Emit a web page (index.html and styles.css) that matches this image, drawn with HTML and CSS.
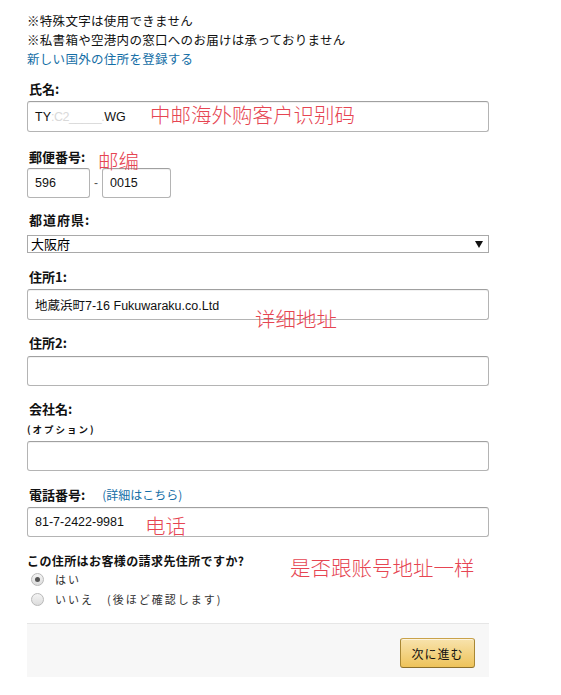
FILE: index.html
```html
<!DOCTYPE html>
<html lang="ja">
<head>
<meta charset="utf-8">
<title>住所の登録</title>
<link rel="stylesheet" href="styles.css">
</head>
<body>
<div class="page">
  <div class="notes">
    <div>※特殊文字は使用できません</div>
    <div>※私書箱や空港内の窓口へのお届けは承っておりません</div>
    <a class="link" href="#">新しい国外の住所を登録する</a>
  </div>

  <div class="field f-name">
    <div class="label">氏名:</div>
    <div class="input"><span>TY</span><span class="blur">:C2_____.</span><span>WG</span></div>
  </div>

  <div class="field f-zip">
    <div class="label">郵便番号:</div>
    <div class="zip-row">
      <input class="box zip1" type="text" value="596">
      <span class="dash">-</span>
      <input class="box zip2" type="text" value="0015">
    </div>
  </div>

  <div class="field f-pref">
    <div class="label label-wide">都道府県:</div>
    <div class="select-wrap">
      <select class="select"><option>大阪府</option></select>
      <svg class="arrow" width="8" height="7" viewBox="0 0 8 7"><path d="M0 0H8L4 7Z" fill="#111"/></svg>
    </div>
  </div>

  <div class="field f-addr1">
    <div class="label">住所1:</div>
    <input class="box wide" type="text" value="地蔵浜町7-16 Fukuwaraku.co.Ltd">
  </div>

  <div class="field f-addr2">
    <div class="label">住所2:</div>
    <input class="box wide tall30" type="text" value="">
  </div>

  <div class="field f-company">
    <div class="label">会社名:</div>
    <div class="optional">(オプション)</div>
    <input class="box wide tall30" type="text" value="">
  </div>

  <div class="field f-tel">
    <div class="label">電話番号: <span class="detail">(<a class="link" href="#">詳細はこちら</a>)</span></div>
    <input class="box wide tall30" type="text" value="81-7-2422-9981">
  </div>

  <div class="question">この住所はお客様の請求先住所ですか?</div>
  <label class="radio-row"><input class="radio" type="radio" name="billing" checked><span>はい</span></label>
  <label class="radio-row"><input class="radio" type="radio" name="billing"><span>いいえ　(後ほど確認します)</span></label>

  <div class="footer">
    <button class="next" type="button">次に進む</button>
  </div>

  <div class="note n1" lang="zh-CN">中邮海外购客户识别码</div>
  <div class="note n2" lang="zh-CN">邮编</div>
  <div class="note n3" lang="zh-CN">详细地址</div>
  <div class="note n4" lang="zh-CN">电话</div>
  <div class="note n5" lang="zh-CN">是否跟账号地址一样</div>
</div>
</body>
</html>
```

FILE: styles.css
```css
html, body {
  margin: 0;
  padding: 0;
  background: #ffffff;
}

body {
  font-family: "Noto Sans CJK JP", "Liberation Sans", sans-serif;
  color: #111;
}

.page {
  position: relative;
  width: 462px;
  margin-left: 27px;
  padding-top: 11px;
}

.notes {
  font-size: 12.5px;
  line-height: 19px;
  color: #111;
  letter-spacing: 0.3px;
}

.link {
  color: #146ea6;
  text-decoration: none;
}

.notes .link {
  display: block;
}

.field {
  display: flex;
  flex-direction: column;
}

.label {
  font-size: 13px;
  line-height: 16px;
  font-weight: bold;
  color: #111;
  margin-left: 2px;
  margin-bottom: 4px;
}

.label-wide {
  letter-spacing: 1px;
  margin-bottom: 7px;
}

.f-name { margin-top: 13px; }
.f-zip { margin-top: 17px; }
.f-zip .label { margin-bottom: 3px; }
.f-pref { margin-top: 14px; }
.f-addr1 { margin-top: 16px; }
.f-addr2 { margin-top: 15px; }
.f-addr2 .label { margin-bottom: 5px; }
.f-company { margin-top: 15px; }
.f-tel { margin-top: 16px; }

.input,
.box {
  box-sizing: border-box;
  height: 31px;
  border: 1px solid #b4b4b4;
  border-top-color: #a0a0a0;
  border-radius: 3px;
  box-shadow: inset 0 1px 0 rgba(0,0,0,0.05);
  background: #fff;
  padding: 0 7px;
  font-family: "Liberation Sans", "Noto Sans CJK JP", sans-serif;
  font-size: 12.5px;
  color: #111;
  margin: 0;
  outline: none;
}

.input {
  display: flex;
  align-items: center;
  width: 462px;
}

.blur {
  color: #d9d9d9;
  letter-spacing: -0.5px;
}

.wide {
  width: 462px;
}

.tall30 {
  height: 30px;
}

.zip-row {
  display: flex;
  align-items: center;
}

.zip1 {
  width: 63px;
  height: 30px;
}

.zip2 {
  width: 69px;
  height: 30px;
}

.dash {
  width: 12px;
  text-align: center;
  color: #555;
  font-family: "Liberation Sans", sans-serif;
  font-size: 12px;
}

.select-wrap {
  position: relative;
  width: 462px;
  height: 18px;
}

.select {
  display: block;
  -webkit-appearance: none;
  appearance: none;
  box-sizing: border-box;
  width: 462px;
  height: 18px;
  margin: 0;
  padding: 0 0 0 3px;
  border: 1px solid #a9a9a9;
  border-radius: 0;
  background: #fff;
  font-family: "Noto Sans CJK JP", sans-serif;
  font-size: 13px;
  line-height: 16px;
  color: #000;
  outline: none;
}

.arrow {
  position: absolute;
  right: 6px;
  top: 6px;
  pointer-events: none;
}

.optional {
  font-size: 9.5px;
  line-height: 14px;
  font-weight: bold;
  color: #111;
  letter-spacing: 2px;
  margin: 1px 0 5px 0;
}

.detail {
  font-weight: normal;
  font-size: 12px;
  color: #146ea6;
  margin-left: 14px;
}

.question {
  margin-top: 16px;
  font-size: 12px;
  line-height: 16px;
  font-weight: bold;
  color: #111;
  letter-spacing: 0.4px;
}

.radio-row {
  display: flex;
  align-items: center;
  height: 20px;
  font-size: 11px;
  color: #333;
  letter-spacing: 2px;
}

.radio {
  -webkit-appearance: none;
  appearance: none;
  box-sizing: border-box;
  width: 13px;
  height: 13px;
  margin: 0 11px 0 4px;
  border: 1px solid #b9b9b9;
  border-radius: 50%;
  background: linear-gradient(#f4f4f4, #dcdcdc);
  position: relative;
}

.radio:checked::after {
  content: "";
  position: absolute;
  left: 3px;
  top: 3px;
  width: 5px;
  height: 5px;
  border-radius: 50%;
  background: #555;
}

.footer {
  margin-top: 14px;
  height: 54px;
  box-sizing: border-box;
  background: #f7f7f7;
  border-top: 1px solid #e6e6e6;
  display: flex;
  justify-content: flex-end;
  align-items: flex-start;
  padding: 14px 14px 0 0;
}

.next {
  box-sizing: border-box;
  width: 75px;
  height: 30px;
  border: 1px solid #a88734;
  border-color: #c9a24a #a88734 #8c6f2b;
  border-radius: 3px;
  background: linear-gradient(#f8e3ad, #eec35a);
  box-shadow: inset 0 1px 0 rgba(255,255,255,0.6);
  font-family: "Noto Sans CJK JP", sans-serif;
  font-size: 12px;
  letter-spacing: 1px;
  color: #111;
  padding: 0;
}

.note {
  position: absolute;
  font-family: "Noto Sans CJK SC", sans-serif;
  font-size: 20.5px;
  line-height: 24px;
  color: #e64552;
  white-space: nowrap;
  font-weight: 300;
}

.n1 { left: 123px; top: 102px; }
.n2 { left: 71px; top: 148px; }
.n3 { left: 228px; top: 306px; }
.n4 { left: 118px; top: 513px; }
.n5 { left: 263px; top: 555px; }
```
